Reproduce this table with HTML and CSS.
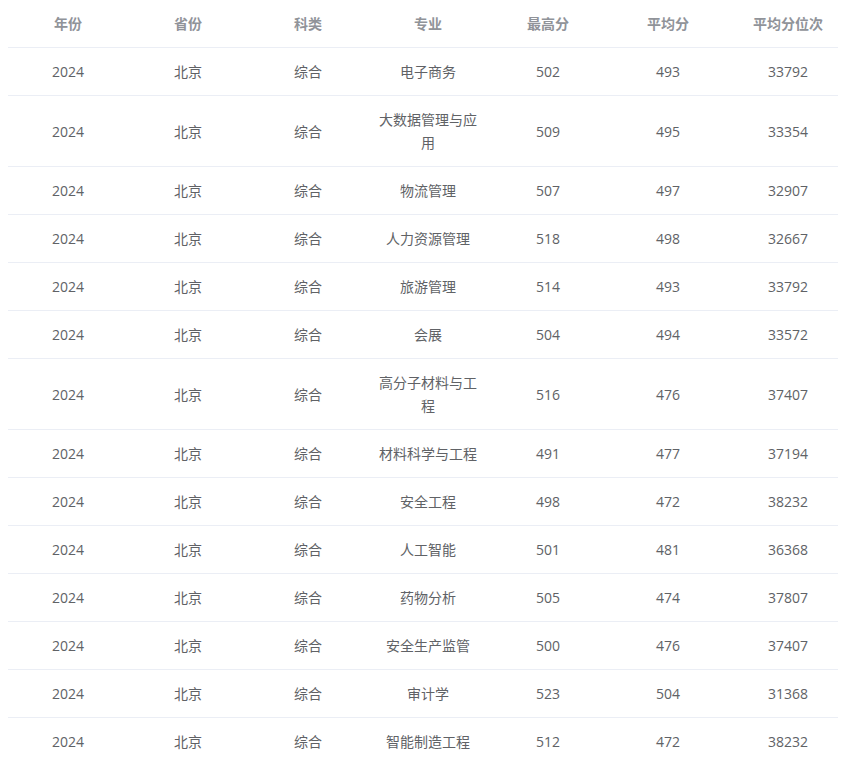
FILE: index.html
```html
<!DOCTYPE html>
<html lang="zh-CN">
<head>
<meta charset="utf-8">
<title>分数线</title>
<link rel="stylesheet" href="styles.css">
</head>
<body>
<div class="table-wrap">
<table class="score-table">
  <colgroup>
    <col class="col"><col class="col"><col class="col"><col class="col"><col class="col"><col class="col"><col class="col">
  </colgroup>
  <thead>
    <tr><th><div class="cell">年份</div></th><th><div class="cell">省份</div></th><th><div class="cell">科类</div></th><th><div class="cell">专业</div></th><th><div class="cell">最高分</div></th><th><div class="cell">平均分</div></th><th><div class="cell">平均分位次</div></th></tr>
  </thead>
  <tbody>
    <tr><td><div class="cell">2024</div></td><td><div class="cell">北京</div></td><td><div class="cell">综合</div></td><td><div class="cell">电子商务</div></td><td><div class="cell">502</div></td><td><div class="cell">493</div></td><td><div class="cell">33792</div></td></tr>
    <tr><td><div class="cell">2024</div></td><td><div class="cell">北京</div></td><td><div class="cell">综合</div></td><td><div class="cell">大数据管理与应用</div></td><td><div class="cell">509</div></td><td><div class="cell">495</div></td><td><div class="cell">33354</div></td></tr>
    <tr><td><div class="cell">2024</div></td><td><div class="cell">北京</div></td><td><div class="cell">综合</div></td><td><div class="cell">物流管理</div></td><td><div class="cell">507</div></td><td><div class="cell">497</div></td><td><div class="cell">32907</div></td></tr>
    <tr><td><div class="cell">2024</div></td><td><div class="cell">北京</div></td><td><div class="cell">综合</div></td><td><div class="cell">人力资源管理</div></td><td><div class="cell">518</div></td><td><div class="cell">498</div></td><td><div class="cell">32667</div></td></tr>
    <tr><td><div class="cell">2024</div></td><td><div class="cell">北京</div></td><td><div class="cell">综合</div></td><td><div class="cell">旅游管理</div></td><td><div class="cell">514</div></td><td><div class="cell">493</div></td><td><div class="cell">33792</div></td></tr>
    <tr><td><div class="cell">2024</div></td><td><div class="cell">北京</div></td><td><div class="cell">综合</div></td><td><div class="cell">会展</div></td><td><div class="cell">504</div></td><td><div class="cell">494</div></td><td><div class="cell">33572</div></td></tr>
    <tr><td><div class="cell">2024</div></td><td><div class="cell">北京</div></td><td><div class="cell">综合</div></td><td><div class="cell">高分子材料与工程</div></td><td><div class="cell">516</div></td><td><div class="cell">476</div></td><td><div class="cell">37407</div></td></tr>
    <tr><td><div class="cell">2024</div></td><td><div class="cell">北京</div></td><td><div class="cell">综合</div></td><td><div class="cell">材料科学与工程</div></td><td><div class="cell">491</div></td><td><div class="cell">477</div></td><td><div class="cell">37194</div></td></tr>
    <tr><td><div class="cell">2024</div></td><td><div class="cell">北京</div></td><td><div class="cell">综合</div></td><td><div class="cell">安全工程</div></td><td><div class="cell">498</div></td><td><div class="cell">472</div></td><td><div class="cell">38232</div></td></tr>
    <tr><td><div class="cell">2024</div></td><td><div class="cell">北京</div></td><td><div class="cell">综合</div></td><td><div class="cell">人工智能</div></td><td><div class="cell">501</div></td><td><div class="cell">481</div></td><td><div class="cell">36368</div></td></tr>
    <tr><td><div class="cell">2024</div></td><td><div class="cell">北京</div></td><td><div class="cell">综合</div></td><td><div class="cell">药物分析</div></td><td><div class="cell">505</div></td><td><div class="cell">474</div></td><td><div class="cell">37807</div></td></tr>
    <tr><td><div class="cell">2024</div></td><td><div class="cell">北京</div></td><td><div class="cell">综合</div></td><td><div class="cell">安全生产监管</div></td><td><div class="cell">500</div></td><td><div class="cell">476</div></td><td><div class="cell">37407</div></td></tr>
    <tr><td><div class="cell">2024</div></td><td><div class="cell">北京</div></td><td><div class="cell">综合</div></td><td><div class="cell">审计学</div></td><td><div class="cell">523</div></td><td><div class="cell">504</div></td><td><div class="cell">31368</div></td></tr>
    <tr><td><div class="cell">2024</div></td><td><div class="cell">北京</div></td><td><div class="cell">综合</div></td><td><div class="cell">智能制造工程</div></td><td><div class="cell">512</div></td><td><div class="cell">472</div></td><td><div class="cell">38232</div></td></tr>
  </tbody>
</table>
</div>
</body>
</html>
```
FILE: styles.css
```css
html, body {
  margin: 0;
  padding: 0;
  background: #fff;
}
body {
  padding: 0 0 0 8px;
  font-family: "Open Sans", "Noto Sans CJK SC", sans-serif;
  font-size: 14px;
  color: #606266;
  overflow: hidden;
}
.table-wrap {
  width: 830px;
  overflow: hidden;
}
.score-table {
  width: 840px;
  table-layout: fixed;
  border-collapse: collapse;
  border-spacing: 0;
}
.col {
  width: 120px;
}
.score-table th,
.score-table td {
  padding: 12px 0;
  border-bottom: 1px solid #ebeef5;
  text-align: center;
  vertical-align: middle;
}
.score-table th {
  color: #909399;
  font-weight: bold;
}
.cell {
  padding: 0 10px;
  line-height: 23px;
  word-break: break-all;
}
```
